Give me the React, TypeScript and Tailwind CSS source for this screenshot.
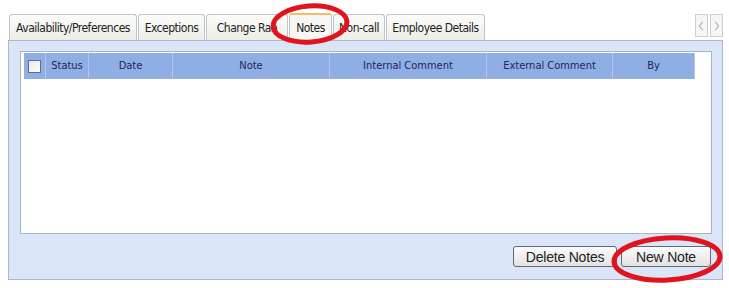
import type { ReactNode } from "react";

const tabs = [
  { label: "Availability/Preferences", w: 128 },
  { label: "Exceptions", w: 67 },
  { label: "Change Ran", w: 82 },
  { label: "Notes", w: 43, active: true },
  { label: "Non-call", w: 52 },
  { label: "Employee Details", w: 99 },
];

const columns = [
  { label: "", w: 22 },
  { label: "Status", w: 43 },
  { label: "Date", w: 84 },
  { label: "Note", w: 157 },
  { label: "Internal Comment", w: 157 },
  { label: "External Comment", w: 126 },
  { label: "By", w: 82 },
];

function Button({ children, w }: { children: ReactNode; w: string }) {
  return (
    <button
      type="button"
      className={`${w} h-[21px] rounded-[3px] border border-[#5f6a76] bg-gradient-to-b from-[#fbfbfb] to-[#e2e2e2] text-[14px] leading-none tracking-[-0.2px] text-[#222]`}
      style={{ fontFamily: '"Liberation Sans", Arial, sans-serif' }}
    >
      {children}
    </button>
  );
}

export default function App() {
  return (
    <div
      className="relative h-[288px] w-[729px] overflow-hidden bg-white text-[11px] text-[#1b2a4a]"
      style={{ fontFamily: '"DejaVu Sans Condensed", "Liberation Sans", sans-serif' }}
    >
      <div className="pl-2 pt-[13px]">
        <div className="flex h-[27px] items-end pr-[6px]">
          <div className="flex items-end gap-[1px] pl-[1px]">
            {tabs.map((t) => (
              <div
                key={t.label}
                style={{ width: t.w }}
                className={`flex items-center justify-center overflow-hidden whitespace-nowrap rounded-t-[3px] border border-b-0 border-[#bfc5cf] text-[12px] tracking-[-0.5px] text-[#222] ${
                  t.active
                    ? "h-[27px] border-t-2 border-t-[#f0c060] bg-[#f6f6f2]"
                    : "h-[26px] bg-gradient-to-b from-[#fbfbf9] to-[#eeeee8]"
                }`}
              >
                {t.label}
              </div>
            ))}
          </div>
          <div className="mb-[3px] ml-auto flex gap-[2px] self-end">
            {["M8 3 L4 8 L8 13", "M5 3 L9 8 L5 13"].map((d) => (
              <div key={d} className="flex h-[23px] w-[13px] items-center justify-center border border-[#cfcfcf] bg-[#f6f6f4]">
                <svg width="13" height="16" viewBox="0 0 13 16">
                  <path d={d} fill="none" stroke="#aaaaaa" strokeWidth="1.3" />
                </svg>
              </div>
            ))}
          </div>
        </div>

        <div className="flex h-[240px] w-[715px] flex-col border border-[#a9b7cf] bg-[#dae5f8] px-[11px] pt-[10px]">
          <div className="h-[183px] w-[692px] border border-[#a7b3c6] bg-white pl-[3px] pt-[1px]">
            <div className="flex h-[26px]">
              {columns.map((c, i) => (
                <div
                  key={i}
                  style={{ width: c.w }}
                  className="flex items-center justify-center border-r border-[#b3c6e6] bg-[#8eaee4] text-[11px] text-[#1b2a55]"
                >
                  {i === 0 ? (
                    <div className="h-[13px] w-[13px] border border-[#5a6f8e] bg-gradient-to-br from-[#e8e8e8] to-white" />
                  ) : (
                    c.label
                  )}
                </div>
              ))}
            </div>
          </div>
          <div className="mt-[12px] flex justify-end gap-[4px]">
            <Button w="w-[104px]">Delete Notes</Button>
            <Button w="w-[90px]">New Note</Button>
          </div>
        </div>
      </div>

      <svg className="pointer-events-none absolute left-0 top-0" width="729" height="288">
        <ellipse cx="310" cy="24" rx="37" ry="18" fill="none" stroke="#e0141c" strokeWidth="5" transform="rotate(-4 310 24)" />
        <ellipse cx="667" cy="259" rx="53" ry="21" fill="none" stroke="#e0141c" strokeWidth="5" transform="rotate(-3 667 259)" />
      </svg>
    </div>
  );
}
